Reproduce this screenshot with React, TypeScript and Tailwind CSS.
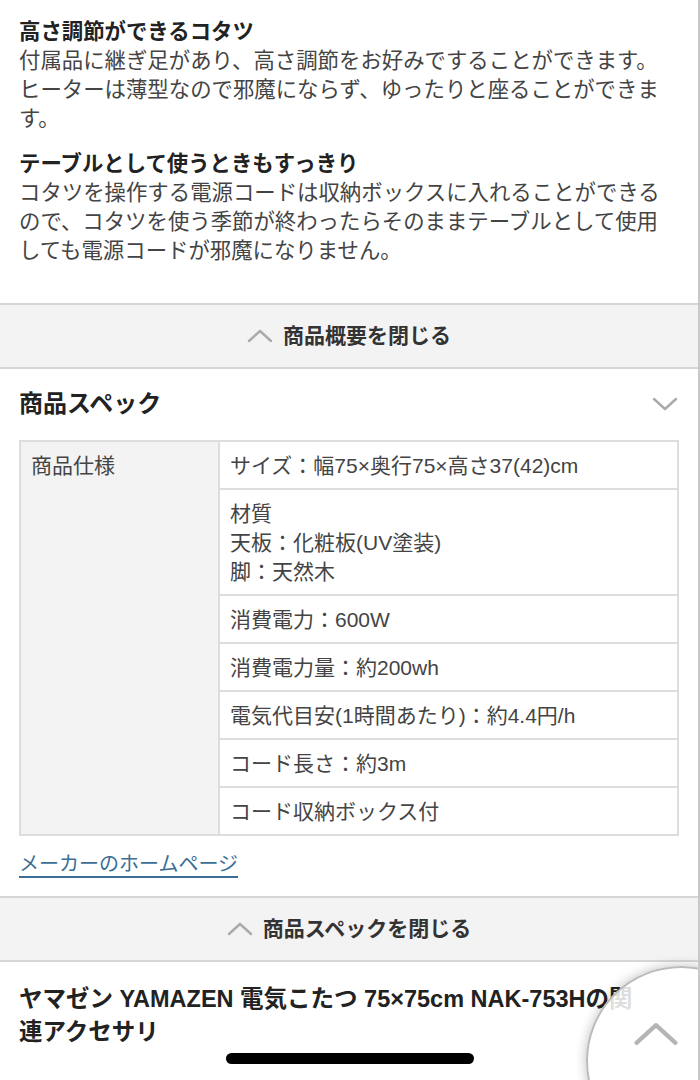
import React from "react";

const font = { fontFamily: '"Liberation Sans", "Noto Sans CJK JP", "Noto Sans", sans-serif' };

const Chevron = ({ dir, className }: { dir: "up" | "down"; className?: string }) => (
  <svg viewBox="0 0 26 14" className={className} fill="none">
    <path
      d={dir === "up" ? "M2 12 L13 2 L24 12" : "M2 2 L13 12 L24 2"}
      stroke="currentColor"
      strokeWidth="2.4"
      strokeLinecap="round"
      strokeLinejoin="round"
    />
  </svg>
);

const CloseBar = ({ label }: { label: string }) => (
  <div className="flex items-center justify-center gap-[10px] h-[66px] bg-[#f3f3f3] border-y-2 border-[#d6d6d6]">
    <Chevron dir="up" className="w-[26px] h-[14px] text-[#aaa]" />
    <span className="text-[21px] font-bold text-[#333]">{label}</span>
  </div>
);

const App = () => {
  const specs: string[][] = [
    ["サイズ：幅75×奥行75×高さ37(42)cm"],
    ["材質", "天板：化粧板(UV塗装)", "脚：天然木"],
    ["消費電力：600W"],
    ["消費電力量：約200wh"],
    ["電気代目安(1時間あたり)：約4.4円/h"],
    ["コード長さ：約3m"],
    ["コード収納ボックス付"],
  ];

  return (
    <div className="relative w-[700px] h-[1080px] overflow-hidden bg-white border-r-2 border-[#c8c8c8]" style={font}>
      {/* 商品概要 */}
      <section className="pl-[19px] pr-[26px] pt-[18px] pb-[37px] text-[21.4px] leading-[29px] text-[#444]">
        <h3 className="font-bold text-[#222]">高さ調節ができるコタツ</h3>
        <p>
          付属品に継ぎ足があり、高さ調節をお好みですることができます。ヒーターは薄型なので邪魔にならず、ゆったりと座ることができます。
        </p>
        <h3 className="mt-[16px] font-bold text-[#222]">テーブルとして使うときもすっきり</h3>
        <p>
          コタツを操作する電源コードは収納ボックスに入れることができるので、コタツを使う季節が終わったらそのままテーブルとして使用しても電源コードが邪魔になりません。
        </p>
      </section>

      <CloseBar label="商品概要を閉じる" />

      {/* 商品スペック */}
      <section className="px-[19px] pt-[19px] pb-[17px]">
        <div className="flex items-center justify-between">
          <h2 className="text-[24px] leading-[32px] font-bold text-[#222]">商品スペック</h2>
          <Chevron dir="down" className="w-[26px] h-[14px] text-[#aaa] mr-[1px]" />
        </div>
        <table className="mt-[20px] w-full border-collapse text-[21px] leading-[29px] text-[#444]">
          <tbody>
            {specs.map((lines, i) => (
              <tr key={i}>
                {i === 0 && (
                  <td
                    rowSpan={specs.length}
                    className="w-[199px] align-top bg-[#f3f3f3] border-2 border-[#ddd] px-[10px] py-[8.5px]"
                  >
                    商品仕様
                  </td>
                )}
                <td className="border-2 border-[#ddd] px-[10px] py-[8.5px]">
                  {lines.map((l, j) => (
                    <div key={j}>{l}</div>
                  ))}
                </td>
              </tr>
            ))}
          </tbody>
        </table>
        <a className="block mt-[14px] w-fit text-[20px] leading-[29px] text-[#3b6e96] underline underline-offset-[5px]">
          メーカーのホームページ
        </a>
      </section>

      <CloseBar label="商品スペックを閉じる" />

      <section className="pl-[19px] pr-[45px] pt-[21px]">
        <h2 className="text-[23.5px] leading-[33px] font-bold text-[#222]">
          ヤマゼン YAMAZEN 電気こたつ 75×75cm NAK-753Hの関連アクセサリ
        </h2>
      </section>

      {/* back to top button */}
      <div className="absolute left-[586px] top-[966px] w-[190px] h-[190px] rounded-full bg-white/85 border-2 border-[#bbb] shadow-[0_0_12px_rgba(0,0,0,0.25)]">
        <Chevron dir="up" className="absolute left-[45px] top-[53px] w-[46px] h-[26px] text-[#b5b5b5]" />
      </div>

      {/* home indicator */}
      <div className="absolute left-[226px] top-[1053px] w-[248px] h-[11px] rounded-full bg-black" />
    </div>
  );
};

export default App;
